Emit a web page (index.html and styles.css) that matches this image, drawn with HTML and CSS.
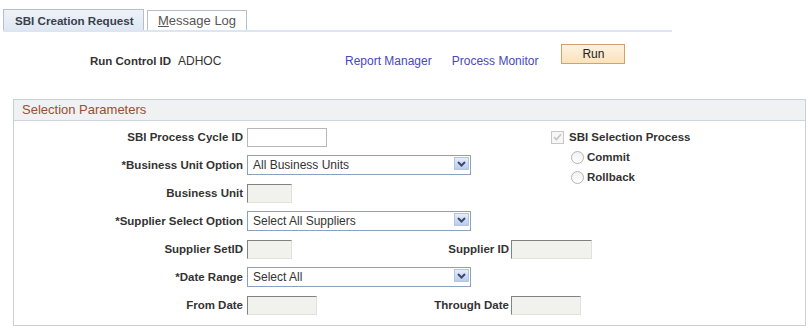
FILE: index.html
```html
<!DOCTYPE html>
<html lang="en">
<head>
  <meta charset="UTF-8">
  <title>SBI Creation Request</title>
  <link rel="stylesheet" href="styles.css">
</head>
<body>
  <div class="tabs">
    <div class="tab active">SBI Creation Request</div>
    <div class="tab"><u>M</u>essage Log</div>
  </div>

  <div class="run-row">
    <span class="rc-label">Run Control ID</span>
    <span class="rc-value">ADHOC</span>
    <a class="link" href="#">Report Manager</a>
    <a class="link" href="#">Process Monitor</a>
    <button class="run-btn">Run</button>
  </div>

  <div class="group">
    <div class="group-head">Selection Parameters</div>
    <div class="grid">
      <label class="lbl">SBI Process Cycle ID</label>
      <div class="field"><span class="input w80"></span></div>

      <div class="options">
        <div class="opt"><span class="check"><svg width="9" height="8" viewBox="0 0 9 8"><path d="M1 4.2 L3.4 6.5 L8 1.2" fill="none" stroke="#c4c4c4" stroke-width="1.6"/></svg></span>SBI Selection Process</div>
        <div class="opt sub"><span class="radio"></span>Commit</div>
        <div class="opt sub"><span class="radio"></span>Rollback</div>
      </div>

      <label class="lbl">*Business Unit Option</label>
      <div class="field span2"><span class="select">All Business Units<span class="arrow"><svg width="9" height="6" viewBox="0 0 9 6"><path d="M1 1 L4.5 4.5 L8 1" fill="none" stroke="#3d4b66" stroke-width="2"/></svg></span></span></div>

      <label class="lbl">Business Unit</label>
      <div class="field"><span class="input disabled w45"></span></div>

      <label class="lbl">*Supplier Select Option</label>
      <div class="field span2"><span class="select">Select All Suppliers<span class="arrow"><svg width="9" height="6" viewBox="0 0 9 6"><path d="M1 1 L4.5 4.5 L8 1" fill="none" stroke="#3d4b66" stroke-width="2"/></svg></span></span></div>

      <label class="lbl">Supplier SetID</label>
      <div class="field"><span class="input disabled w45"></span></div>
      <label class="lbl lbl2">Supplier ID</label>
      <div class="field col4"><span class="input disabled w80"></span></div>

      <label class="lbl">*Date Range</label>
      <div class="field span2"><span class="select">Select All<span class="arrow"><svg width="9" height="6" viewBox="0 0 9 6"><path d="M1 1 L4.5 4.5 L8 1" fill="none" stroke="#3d4b66" stroke-width="2"/></svg></span></span></div>

      <label class="lbl">From Date</label>
      <div class="field"><span class="input disabled w70"></span></div>
      <label class="lbl lbl2">Through Date</label>
      <div class="field col4"><span class="input disabled w70"></span></div>
    </div>
  </div>
</body>
</html>
```

FILE: styles.css
```css
body {
  margin: 0;
  font-family: "Liberation Sans", Arial, sans-serif;
  font-size: 12px;
  color: #333;
  background: #fff;
}
.tabs {
  display: flex;
  align-items: flex-end;
  gap: 3px;
  width: 669px;
  margin-left: 3px;
  padding-top: 9px;
  border-bottom: 2px solid #dbe5f3;
}
.tab {
  height: 19px;
  line-height: 19px;
  padding: 0 10px;
  border: 1px solid #b6c0cc;
  border-bottom: none;
  color: #555;
  background: #fff;
  font-size: 13px;
  white-space: nowrap;
}
.tab.active {
  box-sizing: border-box;
  width: 141px;
  height: 21px;
  line-height: 21px;
  padding: 0 0 0 11px;
  background: linear-gradient(#eef2f8, #e1e8f2);
  color: #37414e;
  font-weight: bold;
  font-size: 11.6px;
}
.run-row {
  display: flex;
  align-items: flex-start;
  height: 22px;
  margin-top: 12px;
}
.rc-label,
.rc-value,
.link {
  margin-top: 10px;
  line-height: 15px;
}
.rc-label {
  margin-left: 90px;
  width: 88px;
  font-weight: bold;
  font-size: 11.5px;
}
.rc-value {
  width: 167px;
}
.link {
  color: #4848b8;
  text-decoration: none;
  margin-right: 20px;
}
.run-btn {
  width: 64px;
  height: 20px;
  padding: 0;
  margin-left: 3px;
  border: 1px solid #d6a06c;
  background: linear-gradient(#fdf2e1, #fbe2bb);
  font-family: inherit;
  font-size: 12px;
  color: #222;
}
.group {
  margin: 33px 0 0 13px;
  width: 791px;
  border: 1px solid #c9d1d6;
}
.group-head {
  height: 20px;
  line-height: 20px;
  padding-left: 8px;
  background: #eff1f2;
  border-bottom: 1px solid #cfd6da;
  color: #9a4e35;
  font-size: 13px;
}
.grid {
  display: grid;
  grid-template-columns: 229px 80px 176px 1fr;
  grid-auto-rows: 28px;
  column-gap: 4px;
  align-items: center;
  padding: 2px 0 6px;
}
.lbl {
  grid-column: 1;
  text-align: right;
  font-weight: bold;
  font-size: 11.5px;
  white-space: nowrap;
}
.lbl.lbl2 {
  grid-column: 3;
  margin-right: -2px;
}
.field {
  display: flex;
  grid-column: 2;
}
.field.col4 {
  grid-column: 4;
}
.field.span2 {
  grid-column: 2 / span 2;
}
.input {
  box-sizing: border-box;
  height: 19px;
  border: 1px solid #b8b8b8;
  background: #fff;
}
.input.disabled {
  background: #f1f1ee;
  border-color: #828282 #e2e2da #e2e2da #828282;
}
.w80 { width: 81px; }
.w70 { width: 70px; }
.w45 { width: 45px; }
.select {
  position: relative;
  box-sizing: border-box;
  width: 224px;
  height: 20px;
  line-height: 18px;
  padding-left: 5px;
  border: 1px solid #8ba1c0;
  background: #fff;
}
.arrow {
  position: absolute;
  top: 1px;
  right: 1px;
  width: 15px;
  height: 13px;
  display: flex;
  align-items: center;
  justify-content: center;
  background: linear-gradient(#e6edfb, #b9cbef);
  border: 1px solid #b4c5e6;
  box-sizing: border-box;
}
.options {
  grid-column: 4;
  grid-row: 1 / span 3;
  align-self: start;
  margin: 4px 0 0 40px;
}
.opt {
  display: flex;
  align-items: center;
  height: 20px;
  font-weight: bold;
  font-size: 11.5px;
}
.opt.sub {
  margin-left: 20px;
}
.check {
  box-sizing: border-box;
  width: 13px;
  height: 13px;
  margin-right: 5px;
  border: 1px solid #c6c6c6;
  background: #f6f6f6;
  display: flex;
  align-items: center;
  justify-content: center;
}
.radio {
  box-sizing: border-box;
  width: 13px;
  height: 13px;
  margin-right: 3px;
  border: 1px solid #b4b4b4;
  border-radius: 50%;
  background: linear-gradient(#f2f2f2, #fff);
}
```
